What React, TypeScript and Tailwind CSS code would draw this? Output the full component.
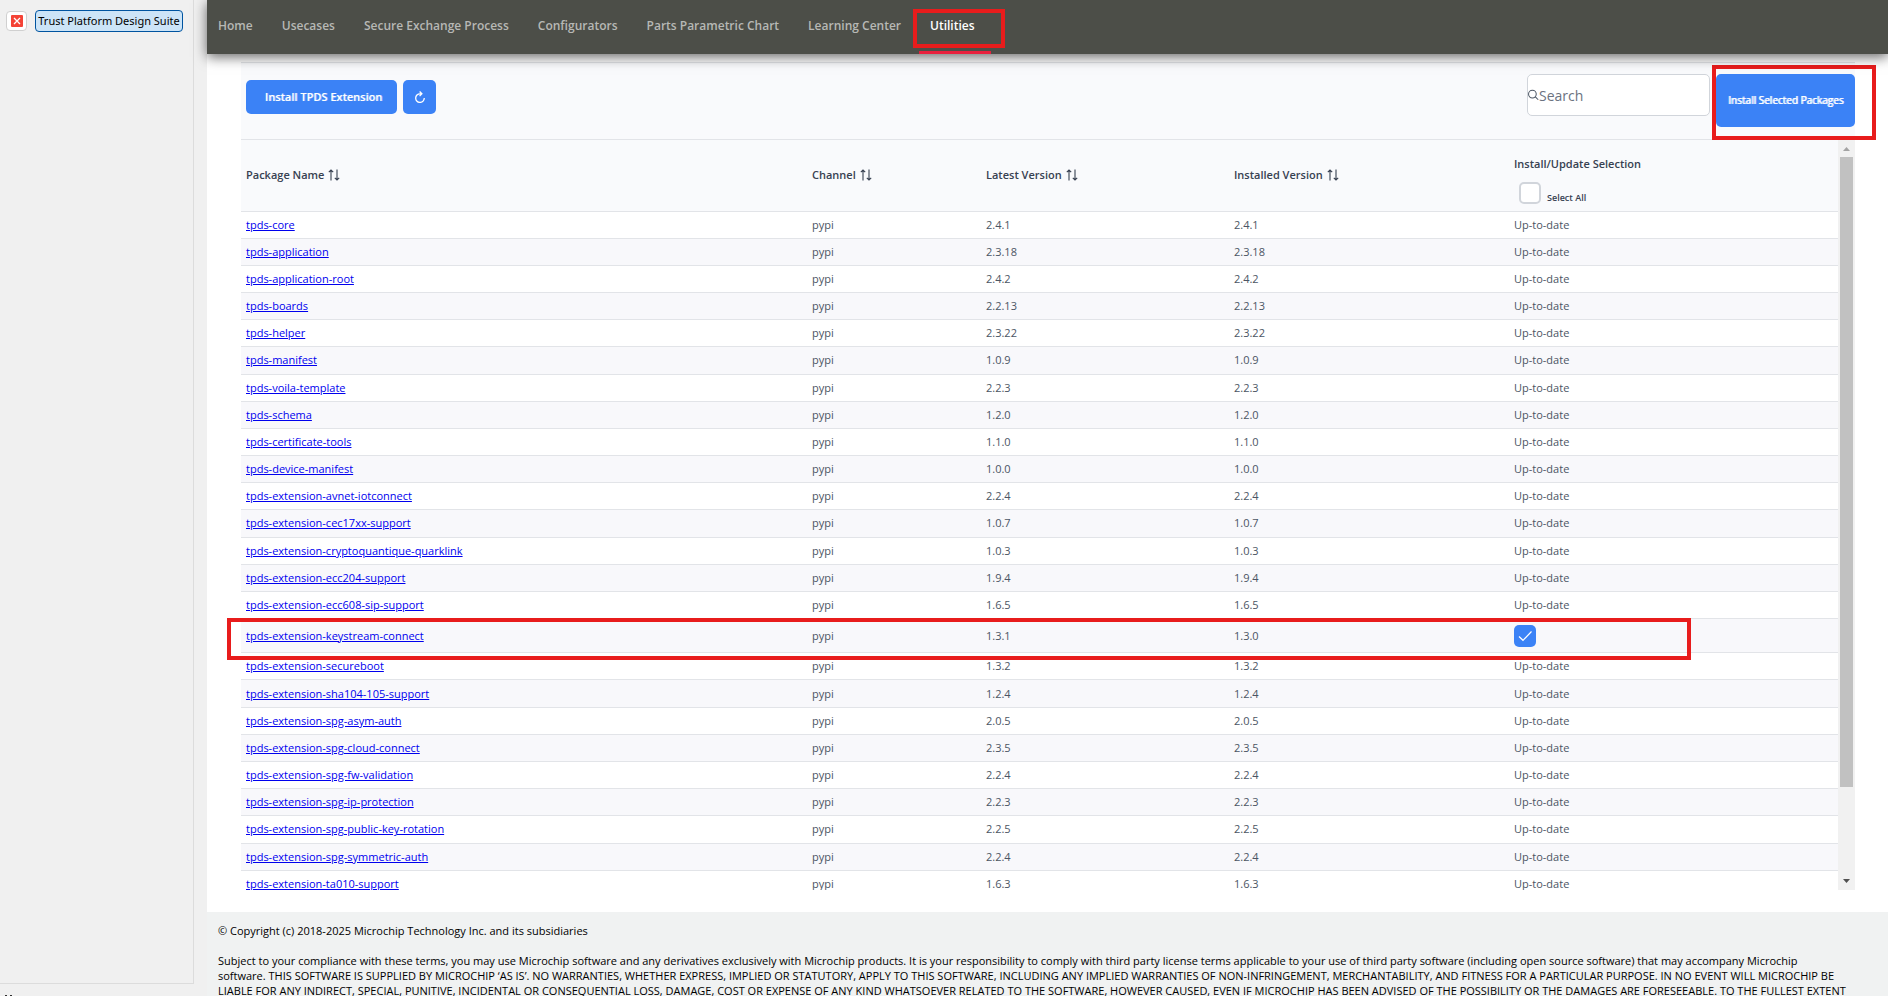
import React from "react";

type Pkg = [name: string, latest: string, installed?: string];

const packages: Pkg[] = [
  ["tpds-core", "2.4.1"],
  ["tpds-application", "2.3.18"],
  ["tpds-application-root", "2.4.2"],
  ["tpds-boards", "2.2.13"],
  ["tpds-helper", "2.3.22"],
  ["tpds-manifest", "1.0.9"],
  ["tpds-voila-template", "2.2.3"],
  ["tpds-schema", "1.2.0"],
  ["tpds-certificate-tools", "1.1.0"],
  ["tpds-device-manifest", "1.0.0"],
  ["tpds-extension-avnet-iotconnect", "2.2.4"],
  ["tpds-extension-cec17xx-support", "1.0.7"],
  ["tpds-extension-cryptoquantique-quarklink", "1.0.3"],
  ["tpds-extension-ecc204-support", "1.9.4"],
  ["tpds-extension-ecc608-sip-support", "1.6.5"],
  ["tpds-extension-keystream-connect", "1.3.1", "1.3.0"],
  ["tpds-extension-secureboot", "1.3.2"],
  ["tpds-extension-sha104-105-support", "1.2.4"],
  ["tpds-extension-spg-asym-auth", "2.0.5"],
  ["tpds-extension-spg-cloud-connect", "2.3.5"],
  ["tpds-extension-spg-fw-validation", "2.2.4"],
  ["tpds-extension-spg-ip-protection", "2.2.3"],
  ["tpds-extension-spg-public-key-rotation", "2.2.5"],
  ["tpds-extension-spg-symmetric-auth", "2.2.4"],
  ["tpds-extension-ta010-support", "1.6.3"],
];

const navItems = [
  "Home",
  "Usecases",
  "Secure Exchange Process",
  "Configurators",
  "Parts Parametric Chart",
  "Learning Center",
];

function SortIcon() {
  return (
    <svg viewBox="0 0 12 12" className="h-3 w-3" fill="none" stroke="#374151" strokeWidth="1.1" aria-hidden="true">
      <path d="M3 11.5V1M.8 3.2 3 1l2.200 2.200M9 .5V11M6.800 8.800 9 11l2.200-2.200" />
    </svg>
  );
}

function SortHeader({ label }: { label: string }) {
  return (
    <th scope="col" className="px-[5px] py-0 font-semibold">
      <button type="button" className="flex items-center gap-1">
        {label}
        <SortIcon />
      </button>
    </th>
  );
}

function Sidebar() {
  return (
    <aside className="flex w-[207px] shrink-0 flex-col bg-[#f0f0f0]">
      <div className="mr-[13px] flex flex-1 items-start gap-2 border-b border-r border-[#dcdcdc] pl-[6px] pt-[10px]">
        <button
          type="button"
          aria-label="Close"
          className="mt-px flex h-5 w-[21px] shrink-0 items-center justify-center rounded-[4px] border border-[#d0d0d0] bg-white"
        >
          <svg viewBox="0 0 12 12" className="h-3 w-3" aria-hidden="true">
            <rect width="12" height="12" rx="1" fill="#f44336" />
            <path d="M3 3l6 6M9 3l-6 6" stroke="#fff" strokeWidth="1.3" />
          </svg>
        </button>
        <button
          type="button"
          className="h-[22px] w-[148px] shrink-0 whitespace-nowrap rounded-[4px] border border-[#0054a0] bg-[#cce4f7] font-['Noto_Sans',sans-serif] text-[11px] leading-5 text-black"
        >
          Trust Platform Design Suite
        </button>
      </div>
      <div className="flex h-3 items-end gap-[3px] pl-[5px]" aria-hidden="true">
        <span className="h-px w-[2px] bg-[#303030]" />
        <span className="h-px w-[2px] bg-[#303030]" />
      </div>
    </aside>
  );
}

function NavBar() {
  return (
    <header className="relative z-10 flex h-[54px] shrink-0 bg-[#4c4e48] shadow-[0_3px_12px_rgba(0,0,0,0.6)]">
      <nav className="flex gap-[29px] pl-[11px] text-[12px] font-semibold leading-[51px] text-[#b7b8b5]">
        {navItems.map((n) => (
          <a key={n} href="#" className="whitespace-nowrap">
            {n}
          </a>
        ))}
        <a href="#" className="relative h-[54px] text-white">
          Utilities
          <span className="absolute -left-[11px] bottom-0 h-[3px] w-[72px] bg-[#e8203c]" />
          <span className="absolute -left-[17px] top-[9px] h-[39px] w-[92px] border-4 border-[#e81c1c]" />
        </a>
      </nav>
    </header>
  );
}

function Toolbar() {
  return (
    <div className="flex h-[78px] shrink-0 items-start justify-between border-y border-[#e2e4e8] bg-[#f9fafc] pl-[5px] pt-[11px]">
      <div className="flex gap-[6px] pt-[6px]">
        <button
          type="button"
          className="h-[34px] w-[151px] rounded-[5px] bg-[#3b82f6] pl-1 text-[11px] font-semibold text-white [text-shadow:1px_0_0_rgba(255,255,255,0.4)]"
        >
          Install TPDS Extension
        </button>
        <button type="button" aria-label="Refresh" className="flex h-[34px] w-[33px] items-center justify-center rounded-[5px] bg-[#3b82f6]">
          <svg viewBox="0 0 12 12" className="h-3 w-3" fill="none" stroke="#fff" strokeWidth="1.3" aria-hidden="true">
            <path d="M7.600 2.800H6A4.300 4.300 0 1 0 10.300 7M5.600.500 7.900 2.800 5.600 5.100" />
          </svg>
        </button>
      </div>
      <div className="flex items-start gap-[6px]">
        <label className="flex h-[42px] w-[183px] items-center rounded-[5px] border border-[#d1d5db] bg-white">
          <svg viewBox="0 0 12 12" className="h-3 w-[11px] shrink-0" fill="none" stroke="#4b5563" strokeWidth="1.1" aria-hidden="true">
            <circle cx="4.800" cy="5" r="4.200" />
            <path d="M8 8l3.200 3.200" />
          </svg>
          <input
            type="search"
            aria-label="Search"
            placeholder="Search"
            className="w-full min-w-0 bg-transparent text-[14px] text-[#4b5563] outline-none placeholder:text-[#6b7280]"
          />
        </label>
        <div className="relative">
          <button
            type="button"
            className="h-[53px] w-[139px] rounded-[5px] bg-[#3b82f6] text-[10px] text-white [text-shadow:1px_0_0_white]"
          >
            Install Selected Packages
          </button>
          <span className="pointer-events-none absolute -left-1 -top-[9px] h-[75px] w-[164px] border-4 border-[#e81c1c]" />
        </div>
      </div>
    </div>
  );
}

function PackageTable() {
  return (
    <div className="relative flex min-h-0 flex-1">
      <div className="min-w-0 flex-1 overflow-hidden">
        <table className="h-[758px] w-full table-fixed border-collapse text-left text-[11px] leading-4 text-[#4b5563]">
          <colgroup>
            <col className="w-[566px]" />
            <col className="w-[174px]" />
            <col className="w-[248px]" />
            <col className="w-[280px]" />
            <col />
          </colgroup>
          <thead>
            <tr className="h-[71px] border-b border-[#e2e4e8] bg-[#f9fafc] text-[#374151]">
              <SortHeader label="Package Name" />
              <SortHeader label="Channel" />
              <SortHeader label="Latest Version" />
              <SortHeader label="Installed Version" />
              <th scope="col" className="px-[5px] pb-0 pt-[10px] font-semibold">
                <div>Install/Update Selection</div>
                <label className="mt-[10px] flex items-end gap-[6px] pl-[5px] text-[9px] leading-[12px]">
                  <input type="checkbox" className="h-[22px] w-[22px] appearance-none rounded-[5px] border-2 border-[#d1d5db] bg-white" />
                  Select All
                </label>
              </th>
            </tr>
          </thead>
          <tbody>
            {packages.map(([name, latest, installed]) => (
              <tr
                key={name}
                className={
                  (installed ? "h-[34px]" : "h-[27px]") + " border-b border-[#e2e4e8] even:bg-[#f8f8fb]"
                }
              >
                <td className="px-[5px] py-0">
                  <a href="#" className="text-[#0000ee] underline">
                    {name}
                  </a>
                </td>
                <td className="px-[5px] py-0">pypi</td>
                <td className="px-[5px] py-0">{latest}</td>
                <td className="px-[5px] py-0">{installed ?? latest}</td>
                <td className="px-[5px] py-0">
                  {installed ? (
                    <label className="relative block h-[22px] w-[22px]">
                      <input
                        type="checkbox"
                        defaultChecked
                        aria-label={"Update " + name}
                        className="block h-[22px] w-[22px] appearance-none rounded-[5px] bg-[#3b82f6]"
                      />
                      <svg viewBox="0 0 22 22" className="pointer-events-none absolute inset-0" fill="none" stroke="#fff" strokeWidth="1.2" aria-hidden="true">
                        <path d="M5 11.500 9 15.300 17.500 6.500" />
                      </svg>
                    </label>
                  ) : (
                    "Up-to-date"
                  )}
                </td>
              </tr>
            ))}
          </tbody>
        </table>
      </div>
      <div className="flex w-[17px] shrink-0 flex-col items-center bg-[#f1f1f1]" aria-hidden="true">
        <svg viewBox="0 0 17 17" className="h-[17px] w-[17px] shrink-0">
          <path d="M5 11h7L8.500 7z" fill="#a3a3a3" />
        </svg>
        <div className="h-[630px] w-[13px] bg-[#c1c1c1]" />
        <svg viewBox="0 0 17 17" className="mt-auto h-[17px] w-[17px] shrink-0">
          <path d="M5 6h7l-3.500 4z" fill="#505050" />
        </svg>
      </div>
      <span className="pointer-events-none absolute -left-[14px] right-[164px] top-[478px] h-[42px] border-4 border-[#e81c1c]" />
    </div>
  );
}

function Footer() {
  return (
    <footer className="h-[84px] shrink-0 overflow-hidden bg-[#f0f2f2] px-[11px] pt-[11px] text-[11px] leading-[15px] text-black">
      <p>© Copyright (c) 2018-2025 Microchip Technology Inc. and its subsidiaries</p>
      <p className="mt-[15px]">
        Subject to your compliance with these terms, you may use Microchip software and any derivatives exclusively with
        Microchip products. It is your responsibility to comply with third party license terms applicable to your use of
        third party software (including open source software) that may accompany Microchip
        <br />
        software. THIS SOFTWARE IS SUPPLIED BY MICROCHIP ‘AS IS’. NO WARRANTIES, WHETHER EXPRESS, IMPLIED OR STATUTORY,
        APPLY TO THIS SOFTWARE, INCLUDING ANY IMPLIED WARRANTIES OF NON-INFRINGEMENT, MERCHANTABILITY, AND FITNESS FOR A
        PARTICULAR PURPOSE. IN NO EVENT WILL MICROCHIP BE
        <br />
        LIABLE FOR ANY INDIRECT, SPECIAL, PUNITIVE, INCIDENTAL OR CONSEQUENTIAL LOSS, DAMAGE, COST OR EXPENSE OF ANY KIND
        WHATSOEVER RELATED TO THE SOFTWARE, HOWEVER CAUSED, EVEN IF MICROCHIP HAS BEEN ADVISED OF THE POSSIBILITY OR THE
        DAMAGES ARE FORESEEABLE. TO THE FULLEST EXTENT
      </p>
    </footer>
  );
}

export default function App() {
  return (
    <div className="flex h-screen overflow-hidden bg-white font-['Open_Sans',sans-serif]">
      <Sidebar />
      <div className="flex min-w-0 flex-1 flex-col">
        <NavBar />
        <main className="flex min-h-0 flex-1 flex-col pb-[22px] pl-[34px] pr-[33px] pt-2">
          <Toolbar />
          <PackageTable />
        </main>
        <Footer />
      </div>
    </div>
  );
}
